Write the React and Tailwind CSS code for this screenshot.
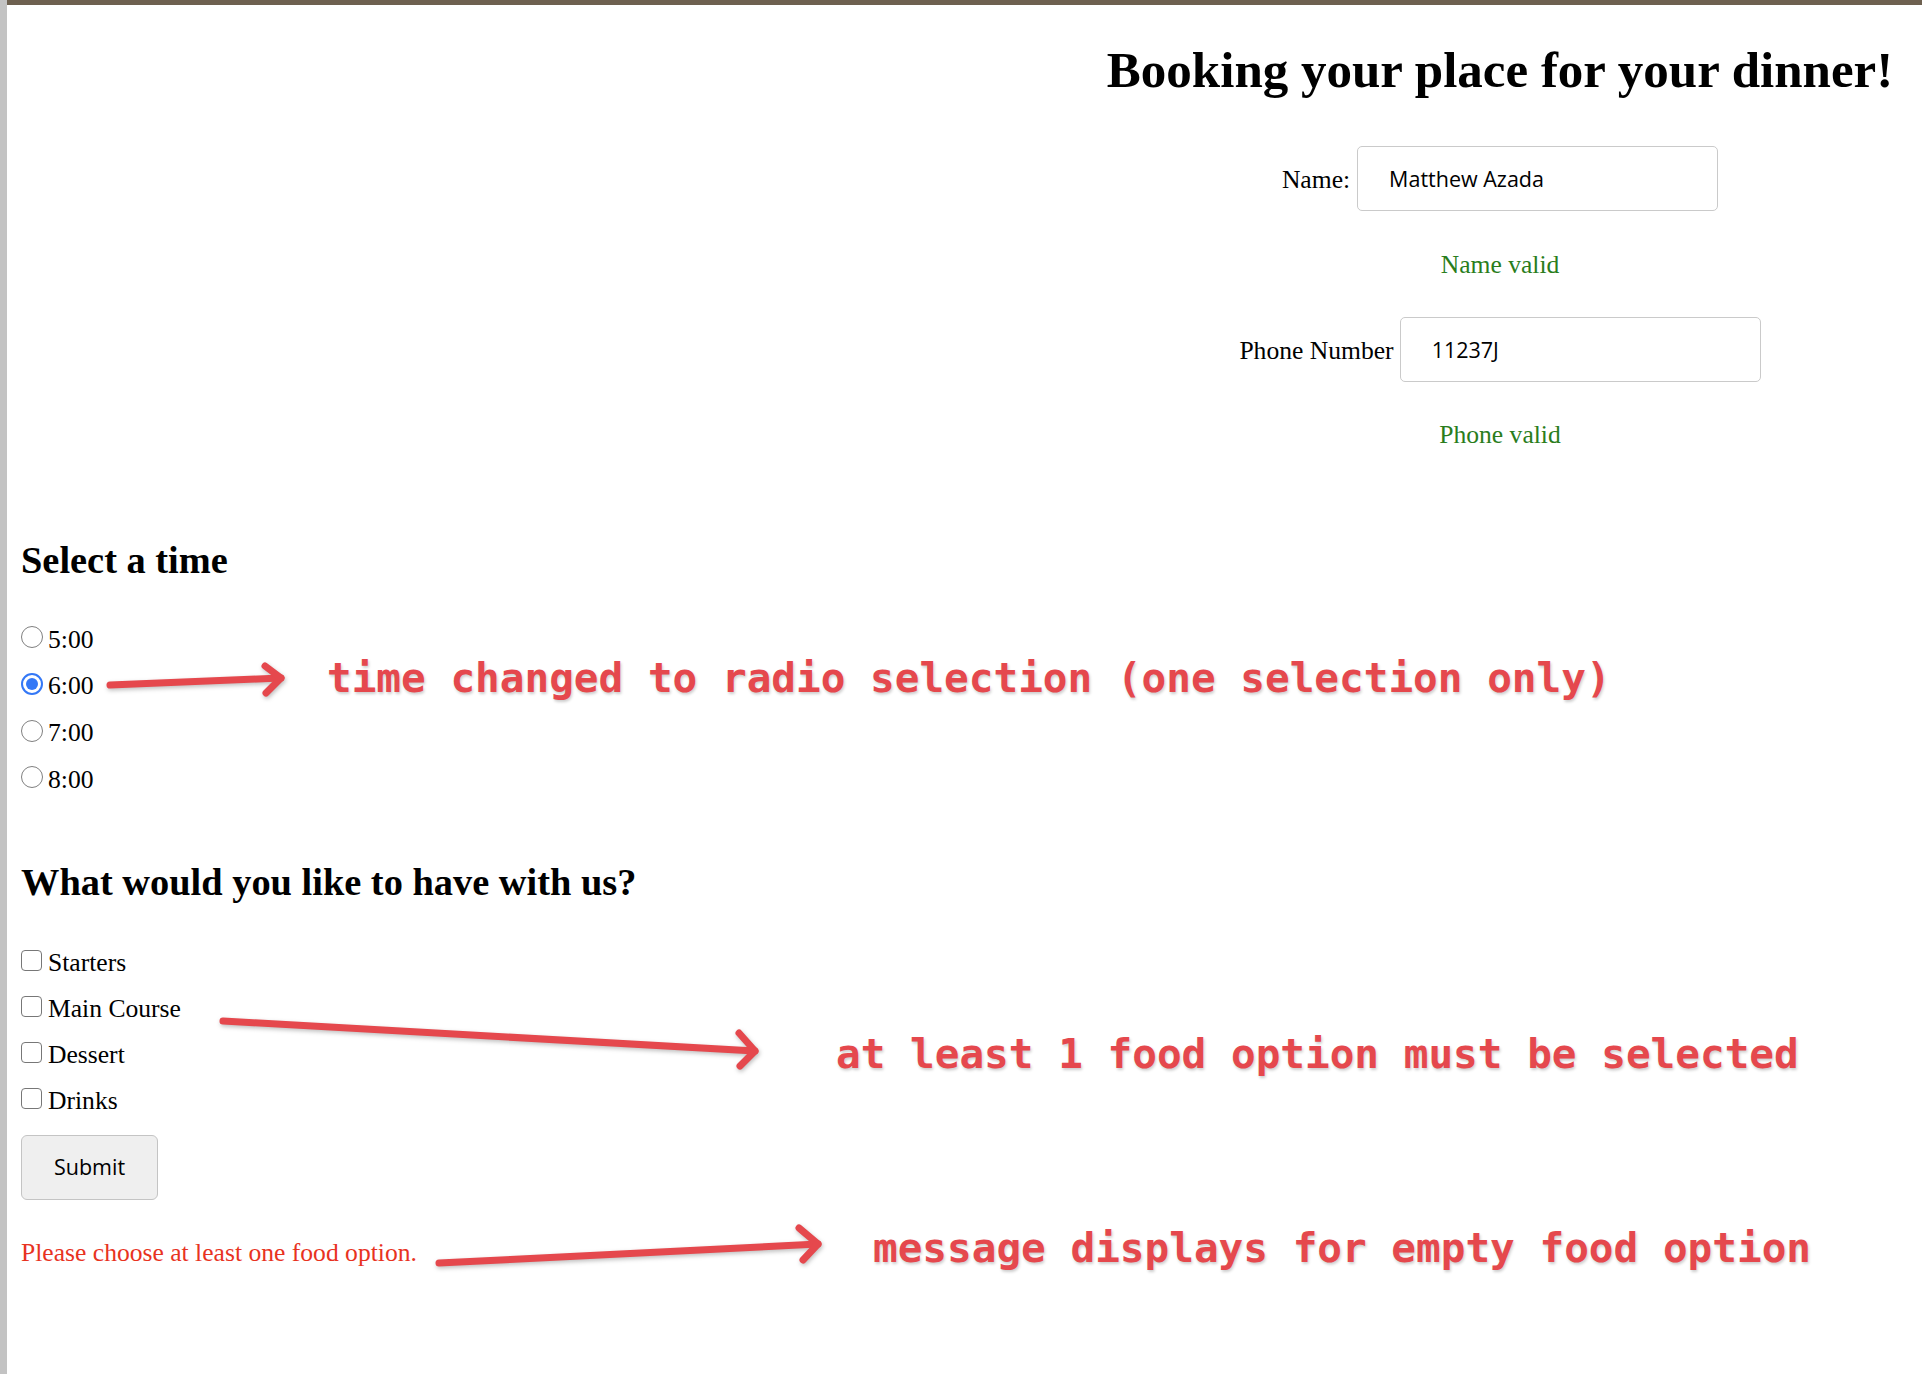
// App.jsx
import React from 'react'

const times = ['5:00', '6:00', '7:00', '8:00']
const foods = ['Starters', 'Main Course', 'Dessert', 'Drinks']

function Radio({ checked }) {
  return checked ? (
    <span className="w-[22px] h-[22px] rounded-full border-[2px] border-[#3478f6] bg-white flex items-center justify-center shrink-0">
      <span className="w-[12px] h-[12px] rounded-full bg-[#3478f6]" />
    </span>
  ) : (
    <span className="w-[22px] h-[22px] rounded-full border-[1.5px] border-[#808080] bg-white shrink-0" />
  )
}

export default function App() {
  return (
    <div className="relative flex min-h-[1374px] bg-white text-black font-['Liberation_Serif',serif]">
      {/* left strip of the window */}
      <div className="w-[7px] shrink-0 bg-[#c3c3c3]" />

      <div className="flex-1 flex flex-col">
        <div className="h-[5px] bg-[#6e6150]" />

        <div className="pl-[14px]">
          {/* booking header + inputs */}
          <div className="ml-auto w-[844px] flex flex-col items-center">
            <h1 className="mt-[36px] text-[51px] leading-[59px] font-bold whitespace-nowrap">
              Booking your place for your dinner!
            </h1>

            <div className="mt-[46px] h-[65px] flex items-center gap-[7px]">
              <label className="text-[25.6px] mt-[3px]">Name:</label>
              <input
                defaultValue="Matthew Azada"
                className="w-[361px] h-[65px] pl-[31px] border-[1.5px] border-[#cacaca] rounded-[5px] text-[21.5px] font-['Open_Sans',sans-serif] outline-none"
              />
            </div>
            <p className="mt-[39px] text-[25.6px] leading-[30px] text-[#2a7d1c]">Name valid</p>

            <div className="mt-[37px] h-[65px] flex items-center gap-[6px]">
              <label className="text-[25.6px] mt-[3px]">Phone Number</label>
              <input
                defaultValue="11237J"
                className="w-[361px] h-[65px] pl-[31px] border-[1.5px] border-[#cacaca] rounded-[5px] text-[21.5px] font-['Open_Sans',sans-serif] outline-none"
              />
            </div>
            <p className="mt-[38px] text-[25.6px] leading-[30px] text-[#2a7d1c]">Phone valid</p>
          </div>

          {/* time */}
          <h2 className="mt-[88px] text-[38.4px] leading-[44px] font-bold">Select a time</h2>
          <div className="mt-[32px] flex flex-col">
            {times.map((t) => (
              <div key={t} className="h-[46.67px] flex items-center gap-[5px] text-[25.6px]">
                <Radio checked={t === '6:00'} />
                <span className="mt-[5px]">{t}</span>
              </div>
            ))}
          </div>

          {/* food */}
          <h2 className="mt-[59px] text-[38.4px] leading-[44px] font-bold">What would you like to have with us?</h2>
          <div className="mt-[34px] flex flex-col">
            {foods.map((f) => (
              <div key={f} className="h-[46px] flex items-center gap-[6px] text-[25.6px]">
                <span className="w-[21px] h-[21px] rounded-[4px] border-[1.5px] border-[#777777] bg-white shrink-0" />
                <span className="mt-[5px]">{f}</span>
              </div>
            ))}
          </div>

          <button className="mt-[13px] w-[137px] h-[65px] bg-[#efefef] border-[1.5px] border-[#c4c4c4] rounded-[6px] text-[21.5px] font-['Open_Sans',sans-serif]">
            Submit
          </button>

          <p className="mt-[38px] text-[25.6px] leading-[30px] text-[#e8331f]">Please choose at least one food option.</p>
        </div>
      </div>

      {/* annotations drawn over the screenshot */}
      <svg
        className="absolute left-0 top-0 pointer-events-none [filter:drop-shadow(1px_2px_2px_rgba(0,0,0,0.25))]"
        width="1922"
        height="1374"
        fill="none"
        stroke="#e5484d"
        strokeWidth="7"
        strokeLinecap="round"
        strokeLinejoin="round"
      >
        <path d="M110 685 L281 678" />
        <path d="M265 666 L281 678 L266 693" />
        <path d="M223 1021 L755 1051" />
        <path d="M739 1033 L755 1051 L740 1066" />
        <path d="M439 1263 L818 1244" />
        <path d="M799 1228 L818 1244 L803 1260" />
      </svg>

      <div className="absolute left-[327px] top-[654px] leading-[48px] text-[41px] font-bold text-[#e5484d] whitespace-nowrap font-['DejaVu_Sans_Mono',monospace] [text-shadow:1px_2px_3px_rgba(0,0,0,0.2)]">
        time changed to radio selection (one selection only)
      </div>
      <div className="absolute left-[836px] top-[1030px] leading-[48px] text-[41px] font-bold text-[#e5484d] whitespace-nowrap font-['DejaVu_Sans_Mono',monospace] [text-shadow:1px_2px_3px_rgba(0,0,0,0.2)]">
        at least 1 food option must be selected
      </div>
      <div className="absolute left-[873px] top-[1224px] leading-[48px] text-[41px] font-bold text-[#e5484d] whitespace-nowrap font-['DejaVu_Sans_Mono',monospace] [text-shadow:1px_2px_3px_rgba(0,0,0,0.2)]">
        message displays for empty food option
      </div>
    </div>
  )
}
